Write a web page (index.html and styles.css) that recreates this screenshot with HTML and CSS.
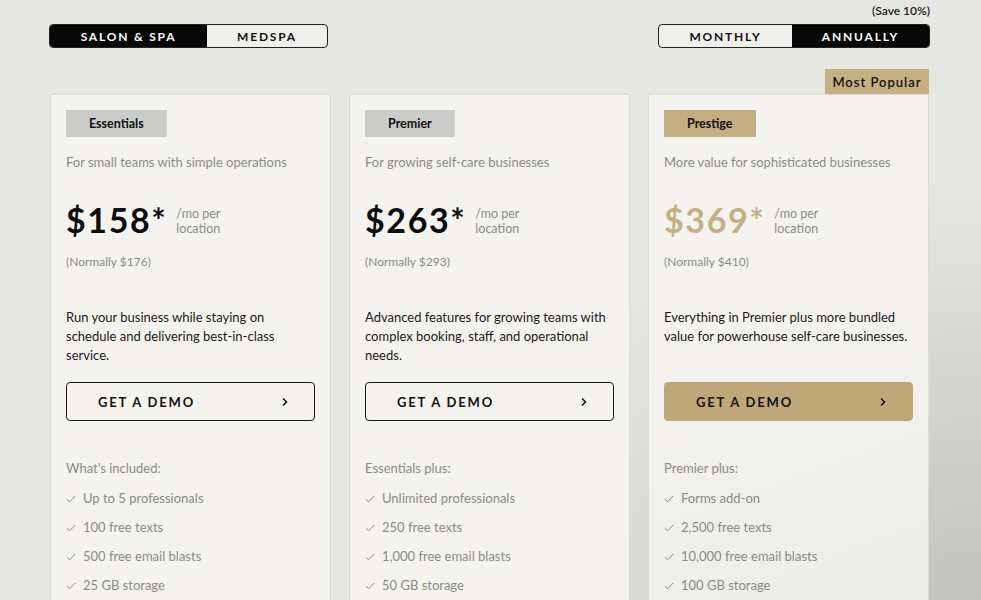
FILE: index.html
```html
<!DOCTYPE html>
<html>
<head>
<meta charset="utf-8">
<link rel="stylesheet" href="styles.css">
</head>
<body>
<div class="page">
  <div class="topbar">
    <div class="seg seg-type">
      <span class="seg-item active w-salon">SALON &amp; SPA</span>
      <span class="seg-item w-med">MEDSPA</span>
    </div>
    <div class="billing">
      <div class="save">(Save 10%)</div>
      <div class="seg">
        <span class="seg-item w-month">MONTHLY</span>
        <span class="seg-item active w-annual">ANNUALLY</span>
      </div>
    </div>
  </div>

  <div class="cards">
    <div class="card">
      <div class="tag tag-gray">Essentials</div>
      <p class="sub">For small teams with simple operations</p>
      <div class="price-row">
        <span class="price">$158*</span>
        <span class="per">/mo per<br>location</span>
      </div>
      <p class="normally">(Normally $176)</p>
      <p class="desc">Run your business while staying on schedule and delivering best-in-class service.</p>
      <a class="btn"><span>GET A DEMO</span><svg class="chev" viewBox="0 0 8 10" width="8" height="10"><path d="M2 1.5 L5.5 5 L2 8.5" fill="none" stroke="#111" stroke-width="1.5"/></svg></a>
      <p class="inc">What's included:</p>
      <ul class="list">
        <li><svg class="check" viewBox="0 0 10 8" width="10" height="8"><path d="M0.8 4.2 L3.6 6.8 L9.2 1" fill="none" stroke="#8a8a88" stroke-width="1"/></svg>Up to 5 professionals</li>
        <li><svg class="check" viewBox="0 0 10 8" width="10" height="8"><path d="M0.8 4.2 L3.6 6.8 L9.2 1" fill="none" stroke="#8a8a88" stroke-width="1"/></svg>100 free texts</li>
        <li><svg class="check" viewBox="0 0 10 8" width="10" height="8"><path d="M0.8 4.2 L3.6 6.8 L9.2 1" fill="none" stroke="#8a8a88" stroke-width="1"/></svg>500 free email blasts</li>
        <li><svg class="check" viewBox="0 0 10 8" width="10" height="8"><path d="M0.8 4.2 L3.6 6.8 L9.2 1" fill="none" stroke="#8a8a88" stroke-width="1"/></svg>25 GB storage</li>
      </ul>
    </div>

    <div class="card">
      <div class="tag tag-gray">Premier</div>
      <p class="sub">For growing self-care businesses</p>
      <div class="price-row">
        <span class="price">$263*</span>
        <span class="per">/mo per<br>location</span>
      </div>
      <p class="normally">(Normally $293)</p>
      <p class="desc">Advanced features for growing teams with complex booking, staff, and operational needs.</p>
      <a class="btn"><span>GET A DEMO</span><svg class="chev" viewBox="0 0 8 10" width="8" height="10"><path d="M2 1.5 L5.5 5 L2 8.5" fill="none" stroke="#111" stroke-width="1.5"/></svg></a>
      <p class="inc">Essentials plus:</p>
      <ul class="list">
        <li><svg class="check" viewBox="0 0 10 8" width="10" height="8"><path d="M0.8 4.2 L3.6 6.8 L9.2 1" fill="none" stroke="#8a8a88" stroke-width="1"/></svg>Unlimited professionals</li>
        <li><svg class="check" viewBox="0 0 10 8" width="10" height="8"><path d="M0.8 4.2 L3.6 6.8 L9.2 1" fill="none" stroke="#8a8a88" stroke-width="1"/></svg>250 free texts</li>
        <li><svg class="check" viewBox="0 0 10 8" width="10" height="8"><path d="M0.8 4.2 L3.6 6.8 L9.2 1" fill="none" stroke="#8a8a88" stroke-width="1"/></svg>1,000 free email blasts</li>
        <li><svg class="check" viewBox="0 0 10 8" width="10" height="8"><path d="M0.8 4.2 L3.6 6.8 L9.2 1" fill="none" stroke="#8a8a88" stroke-width="1"/></svg>50 GB storage</li>
      </ul>
    </div>

    <div class="card card-pop">
      <div class="badge">Most Popular</div>
      <div class="tag tag-gold">Prestige</div>
      <p class="sub">More value for sophisticated businesses</p>
      <div class="price-row">
        <span class="price price-gold">$369*</span>
        <span class="per">/mo per<br>location</span>
      </div>
      <p class="normally">(Normally $410)</p>
      <p class="desc">Everything in Premier plus more bundled value for powerhouse self-care businesses.</p>
      <a class="btn btn-gold"><span>GET A DEMO</span><svg class="chev" viewBox="0 0 8 10" width="8" height="10"><path d="M2 1.5 L5.5 5 L2 8.5" fill="none" stroke="#111" stroke-width="1.5"/></svg></a>
      <p class="inc">Premier plus:</p>
      <ul class="list">
        <li><svg class="check" viewBox="0 0 10 8" width="10" height="8"><path d="M0.8 4.2 L3.6 6.8 L9.2 1" fill="none" stroke="#8a8a88" stroke-width="1"/></svg>Forms add-on</li>
        <li><svg class="check" viewBox="0 0 10 8" width="10" height="8"><path d="M0.8 4.2 L3.6 6.8 L9.2 1" fill="none" stroke="#8a8a88" stroke-width="1"/></svg>2,500 free texts</li>
        <li><svg class="check" viewBox="0 0 10 8" width="10" height="8"><path d="M0.8 4.2 L3.6 6.8 L9.2 1" fill="none" stroke="#8a8a88" stroke-width="1"/></svg>10,000 free email blasts</li>
        <li><svg class="check" viewBox="0 0 10 8" width="10" height="8"><path d="M0.8 4.2 L3.6 6.8 L9.2 1" fill="none" stroke="#8a8a88" stroke-width="1"/></svg>100 GB storage</li>
      </ul>
    </div>
  </div>
</div>
</body>
</html>
```

FILE: styles.css
```css
* { box-sizing: border-box; }
html, body { margin: 0; padding: 0; }
body {
  width: 981px;
  height: 600px;
  overflow: hidden;
  font-family: "Lato", "Liberation Sans", sans-serif;
  color: #111;
  background:
    radial-gradient(ellipse 520px 420px at 100% 100%, rgba(190,190,188,0.9), rgba(190,190,188,0) 100%),
    #e6e6e2;
}
p { margin: 0; }

.page {
  padding-left: 49px;
  width: 930px;
}

.topbar {
  display: flex;
  justify-content: space-between;
  align-items: flex-end;
  padding-top: 4px;
}
.billing {
  display: flex;
  flex-direction: column;
  align-items: flex-end;
}
.save {
  font-size: 12px;
  font-weight: 600;
  line-height: 14px;
  margin-bottom: 6px;
  color: #222;
}
.seg {
  display: flex;
  height: 24px;
  border: 1px solid #222;
  border-radius: 4px;
  overflow: hidden;
  background: #efefec;
}
.seg-item {
  display: flex;
  align-items: center;
  justify-content: center;
  font-size: 12px;
  font-weight: 700;
  letter-spacing: 1.8px;
  color: #111;
}
.seg-item.active { background: #070707; color: #fff; }
.w-salon { width: 157px; }
.w-med { width: 120px; }
.w-month { width: 133px; }
.w-annual { width: 137px; }

.cards {
  display: flex;
  gap: 18px;
  margin-top: 46px;
  margin-left: 1px;
}
.card {
  position: relative;
  width: 281px;
  height: 560px;
  background: #f4f3f0;
  border: 1px solid #dcdbd7;
  padding: 15px 15px 0 15px;
}
.card-pop {
  background: linear-gradient(160deg, #f4f3f0 40%, #ebebe8 100%);
}
.badge {
  position: absolute;
  top: -26px;
  right: -1px;
  width: 104px;
  height: 25px;
  background: #c6b083;
  font-size: 13px;
  font-weight: 600;
  letter-spacing: 1px;
  display: flex;
  align-items: center;
  justify-content: center;
  color: #111;
}
.tag {
  display: inline-flex;
  height: 27px;
  padding: 0 23px;
  align-items: center;
  justify-content: center;
  font-size: 12.5px;
  font-weight: 700;
  color: #111;
}
.tag-gray { background: #cbcbca; }
.tag-gold { background: #c4ad80; }

.sub {
  margin-top: 16px;
  font-size: 13px;
  line-height: 18px;
  color: #8b8b89;
}
.price-row {
  display: flex;
  align-items: flex-start;
  margin-top: 29px;
  height: 40px;
}
.price {
  font-size: 34px;
  line-height: 40px;
  font-weight: 700;
  color: #0c0c0c;
  letter-spacing: 1.6px;
}
.price-gold { color: #c6b083; }
.per {
  margin-left: 9px;
  margin-top: 6px;
  font-size: 12.5px;
  line-height: 15px;
  color: #8b8b89;
}
.normally {
  margin-top: 14px;
  font-size: 12px;
  line-height: 16px;
  color: #8b8b89;
}
.desc {
  margin-top: 38px;
  font-size: 13px;
  line-height: 19px;
  color: #1a1a1a;
  height: 57px;
}
.btn {
  margin-top: 17px;
  height: 39px;
  border: 1px solid #1a1a1a;
  border-radius: 4px;
  display: flex;
  align-items: center;
  justify-content: space-between;
  padding: 0 25px 0 31px;
  font-size: 13px;
  font-weight: 700;
  letter-spacing: 1.8px;
  color: #111;
}
.btn-gold {
  background: #bfa77a;
  border-color: #bfa77a;
}
.inc {
  margin-top: 38px;
  font-size: 13px;
  line-height: 18px;
  color: #8b8b89;
}
.list {
  list-style: none;
  margin: 6px 0 0 0;
  padding: 0;
}
.list li {
  display: flex;
  align-items: center;
  height: 29px;
  font-size: 13px;
  color: #8b8b89;
}
.check {
  margin-right: 7px;
  margin-top: 2px;
}
```
